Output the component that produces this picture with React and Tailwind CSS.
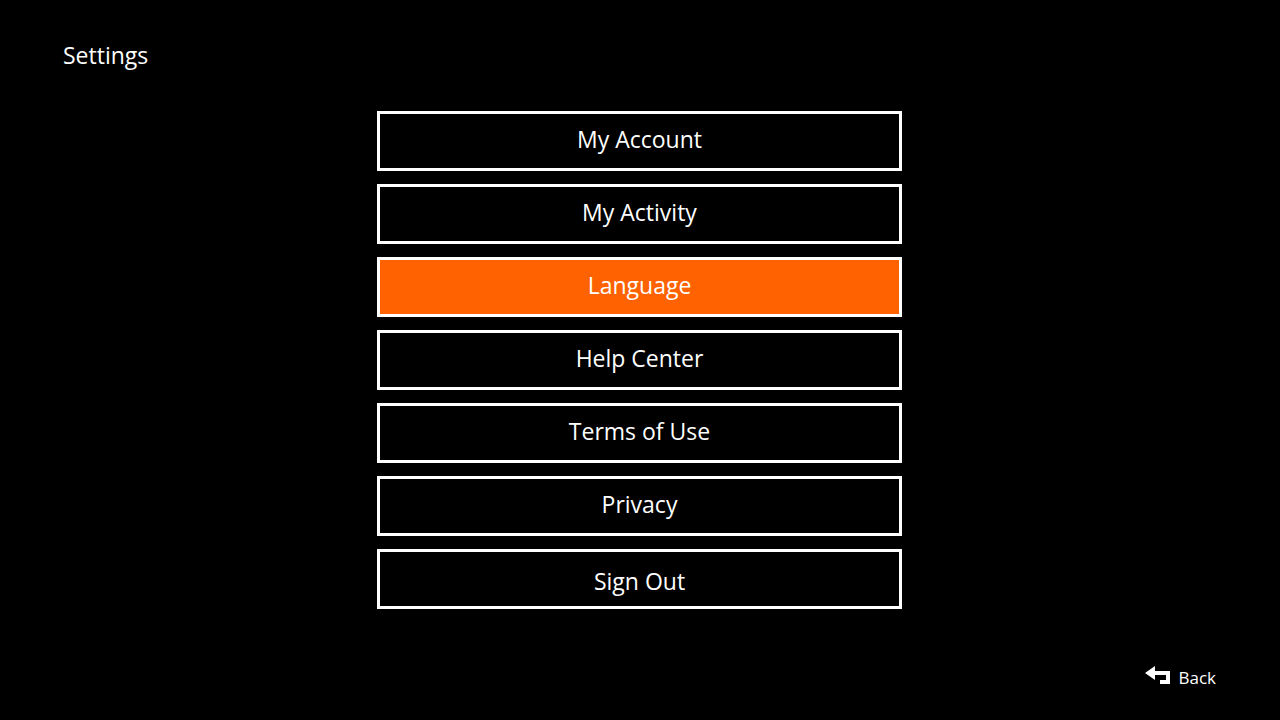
import React, { useState } from 'react'

const items = ['My Account', 'My Activity', 'Language', 'Help Center', 'Terms of Use', 'Privacy', 'Sign Out']

function BackIcon() {
    return (
        <svg width="25" height="18" viewBox="0 0 25 18" fill="currentColor" aria-hidden="true">
            <path d="M0 7 L10 0 V5 H25 V18 H15 V14 H21 V9 H10 V14 Z" />
        </svg>
    )
}

function App() {
    const [selected, setSelected] = useState('Language')

    return (
        <div className="flex min-h-screen flex-col bg-black font-['Open_Sans','Noto_Sans',sans-serif] text-white">
            <h1 className="px-[63px] pt-[39px] text-[23px] leading-8">Settings</h1>
            <nav className="mx-auto mt-10 flex w-full max-w-[526px] flex-col gap-[13px] pr-px">
                {items.map((item) => (
                    <button
                        key={item}
                        type="button"
                        onClick={() => setSelected(item)}
                        className={`h-[60px] border-3 border-white text-[23px] leading-8 ${item === 'Sign Out' ? 'pt-1' : 'pb-1'} ${selected === item ? 'bg-[#ff6200]' : 'bg-black'}`}
                    >
                        {item}
                    </button>
                ))}
            </nav>
            <footer className="mt-auto flex justify-end px-16 pb-[30px]">
                <button type="button" className="flex items-start gap-2 text-[17px] leading-6">
                    <BackIcon />
                    Back
                </button>
            </footer>
        </div>
    )
}

export default App
